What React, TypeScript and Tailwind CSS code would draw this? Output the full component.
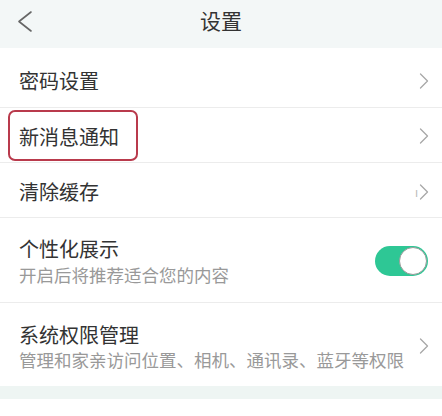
import { ChevronRight } from 'lucide-react';

const font = { fontFamily: '"Noto Sans CJK SC", "Noto Sans", sans-serif' };

function Arrow() {
  return <ChevronRight className="w-[28px] h-[28px] text-[#a8a8a8]" strokeWidth={1.1} />;
}

export default function App() {
  return (
    <div className="w-[442px] h-[416px] bg-white overflow-hidden" style={font}>
      {/* Header */}
      <div className="h-[48px] bg-[#f3f7f7] relative flex items-center justify-center">
        <svg className="absolute left-0 top-0" width="40" height="40" viewBox="0 0 40 40" fill="none">
          <polyline points="31,12 19,21.5 31,31" stroke="#666" strokeWidth="1.6" strokeLinecap="round" strokeLinejoin="round" />
        </svg>
        <span className="text-[21px] text-[#333] -mt-[6px]">设置</span>
      </div>

      {/* Rows */}
      <div className="flex flex-col">
        <div className="h-[60px] flex items-center justify-between pl-[19px] pr-[4px] pt-[6px] border-b border-[#ececec]">
          <span className="text-[20px] text-[#333]">密码设置</span>
          <Arrow />
        </div>
        <div className="h-[55px] flex items-center justify-between pl-[8px] pr-[4px] pt-[1px] border-b border-[#ececec]">
          <span className="text-[20px] text-[#333] border-2 border-[#b93a4c] rounded-[7px] px-[9px] pt-[3px] h-[51px] w-[130px] flex items-center">
            新消息通知
          </span>
          <Arrow />
        </div>
        <div className="h-[55px] flex items-center justify-between pl-[19px] pr-[4px] pt-[3px] border-b border-[#ececec]">
          <span className="text-[20px] text-[#333]">清除缓存</span>
          <div className="flex items-center">
            <span className="text-[12px] text-[#bbb] -mr-[8px]">ı</span>
            <Arrow />
          </div>
        </div>
        <div className="h-[85px] flex items-center justify-between pl-[19px] pr-[14px] pt-[1px] border-b border-[#ececec]">
          <div className="flex flex-col">
            <span className="text-[20px] text-[#333] leading-[28px]">个性化展示</span>
            <span className="text-[17.5px] text-[#999] leading-[24px]">开启后将推荐适合您的内容</span>
          </div>
          <div className="w-[53px] h-[30px] rounded-full bg-[#2ec795] relative">
            <div className="absolute right-[1px] top-[1px] w-[28px] h-[28px] rounded-full bg-white border border-[#9a9a9a]" />
          </div>
        </div>
        <div className="h-[83px] flex items-center justify-between pl-[19px] pr-[4px] pt-[3px]">
          <div className="flex flex-col">
            <span className="text-[20px] text-[#333] leading-[28px]">系统权限管理</span>
            <span className="text-[17.5px] text-[#999] leading-[22px]">管理和家亲访问位置、相机、通讯录、蓝牙等权限</span>
          </div>
          <Arrow />
        </div>
        <div className="h-[13px] bg-[#eef5f3]" />
      </div>
    </div>
  );
}
